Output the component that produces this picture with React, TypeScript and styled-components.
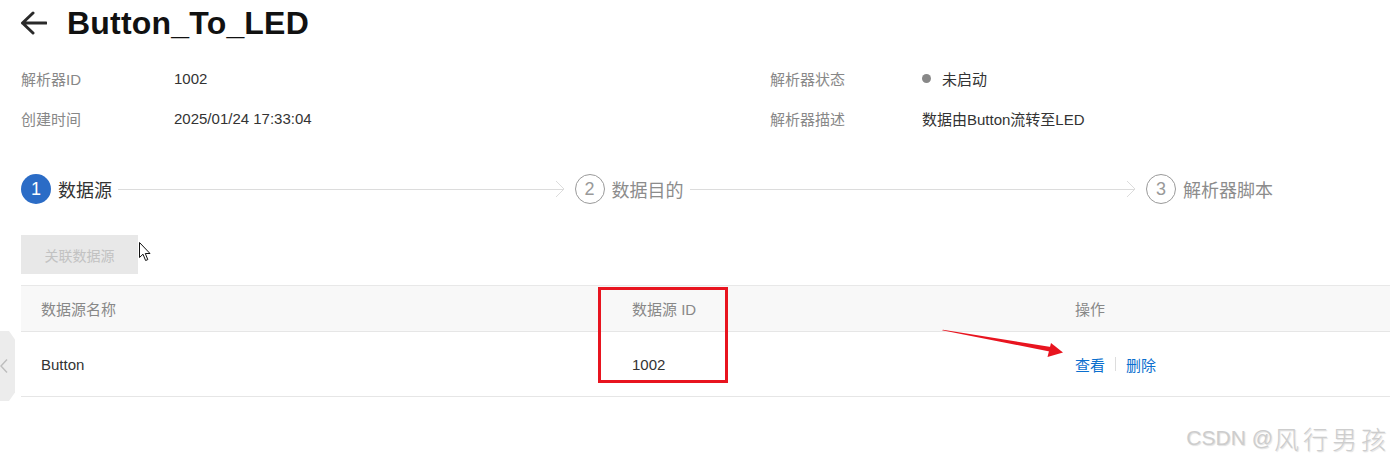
import React from "react";
import styled, { createGlobalStyle } from "styled-components";

const Global = createGlobalStyle`
  html, body { margin: 0; padding: 0; background: #ffffff; }
  body { font-family: "Liberation Sans", "Noto Sans CJK SC", sans-serif; }
  * { box-sizing: border-box; }
`;

const Page = styled.div`
  position: relative;
  width: 1390px;
  height: 469px;
  padding-left: 21px;
  overflow: hidden;
  background: #ffffff;
`;

const Header = styled.div`
  display: flex;
  align-items: center;
  height: 46px;
  gap: 20px;
`;

const BackIcon = styled.svg`
  width: 27px;
  height: 24px;
  margin-left: -1px;
  flex-shrink: 0;
`;

const Title = styled.h1`
  margin: 0;
  font-size: 32px;
  font-weight: 700;
  color: #111111;
  line-height: 40px;
  letter-spacing: 0.2px;
`;

const InfoGrid = styled.div`
  margin-top: 12px;
  display: grid;
  grid-template-columns: 153px 596px 152px 1fr;
  grid-auto-rows: 40px;
  align-items: center;
  font-size: 15px;
`;

const Label = styled.div`
  color: #888888;
`;

const Value = styled.div`
  color: #333333;
  display: flex;
  align-items: center;
`;

const Dot = styled.span`
  width: 9px;
  height: 9px;
  border-radius: 50%;
  background: #888888;
  margin-left: 0;
  margin-right: 11px;
`;

const Steps = styled.div`
  margin-top: 36px;
  width: 1252px;
  height: 30px;
  display: flex;
  align-items: center;
`;

const Step = styled.div`
  display: flex;
  align-items: center;
  gap: 7px;
  flex-shrink: 0;
`;

const StepCircle = styled.div<{ $active?: boolean }>`
  width: 30px;
  height: 30px;
  border-radius: 50%;
  display: flex;
  align-items: center;
  justify-content: center;
  font-size: 18px;
  font-family: "Liberation Sans", sans-serif;
  background: ${(p) => (p.$active ? "#2b6cc6" : "#ffffff")};
  color: ${(p) => (p.$active ? "#ffffff" : "#999999")};
  border: ${(p) => (p.$active ? "none" : "1px solid #9a9a9a")};
`;

const StepText = styled.span<{ $active?: boolean }>`
  font-size: 18px;
  font-family: "Noto Sans CJK SC", sans-serif;
  color: ${(p) => (p.$active ? "#333333" : "#8c8c8c")};
  line-height: 30px;
`;

const Connector = styled.div`
  flex: 1;
  display: flex;
  align-items: center;
  margin: 0 10px 0 6px;
  height: 30px;
`;

const ConnectorLine = styled.div`
  flex: 1;
  height: 1px;
  background: #dcdcdc;
`;

const Chevron = styled.svg`
  width: 10px;
  height: 20px;
  margin-left: -9px;
  flex-shrink: 0;
`;

const LinkButton = styled.button`
  margin-top: 31px;
  width: 117px;
  height: 39px;
  border: none;
  background: #e8e8e8;
  color: #c2c2c2;
  font-size: 14px;
  font-family: "Noto Sans CJK SC", sans-serif;
  display: block;
  padding: 0;
  cursor: not-allowed;
`;

const Table = styled.div`
  margin-top: 11px;
  border-top: 1px solid #e8e8e8;
  display: grid;
  grid-template-columns: 591px 443px 1fr;
  font-size: 15px;
`;

const HeadCell = styled.div`
  height: 46px;
  background: #f8f8f8;
  border-bottom: 1px solid #e6e6e6;
  padding-left: 20px;
  display: flex;
  align-items: center;
  color: #888888;
`;

const BodyCell = styled.div`
  height: 65px;
  border-bottom: 1px solid #e6e6e6;
  padding-left: 20px;
  display: flex;
  align-items: center;
  color: #333333;
`;

const Action = styled.a`
  color: #0b6fce;
  text-decoration: none;
  cursor: pointer;
`;

const Sep = styled.span`
  width: 1px;
  height: 14px;
  background: #dddddd;
  margin: 0 10px;
`;

const RedBox = styled.div`
  position: absolute;
  left: 598px;
  top: 287px;
  width: 130px;
  height: 96px;
  border: 3px solid #e8141f;
  pointer-events: none;
`;

const Overlay = styled.svg`
  position: absolute;
  pointer-events: none;
`;

const SideTab = styled.div`
  position: absolute;
  left: 0;
  top: 331px;
  width: 15px;
  height: 70px;
  background: #ececec;
  clip-path: polygon(0 0, 60% 0, 100% 12%, 100% 88%, 60% 100%, 0 100%);
  display: flex;
  align-items: center;
`;

const Watermark = styled.div`
  position: absolute;
  right: 4px;
  bottom: 13px;
  font-size: 21px;
  color: #cdcdcd;
  text-shadow: 1px 1px 1px rgba(0, 0, 0, 0.12);
  font-family: "Liberation Sans", "Noto Sans CJK SC", sans-serif;
  display: flex;
  align-items: center;
  white-space: nowrap;
`;

const WatermarkCJK = styled.span`
  font-size: 25px;
  font-weight: 300;
  letter-spacing: 4px;
  margin-right: -4px;
  font-family: "Noto Sans CJK SC", sans-serif;
  margin-left: 1px;
`;

export default function App() {
  return (
    <>
      <Global />
      <Page>
        <Header>
          <BackIcon viewBox="0 0 27 24" fill="none">
            <path
              d="M2.5 12 H26 M13 2 L2.5 12 L13 22"
              stroke="#2a2a2a"
              strokeWidth="3"
              strokeLinecap="round"
              strokeLinejoin="round"
            />
          </BackIcon>
          <Title>Button_To_LED</Title>
        </Header>

        <InfoGrid>
          <Label>解析器ID</Label>
          <Value>1002</Value>
          <Label>解析器状态</Label>
          <Value>
            <Dot />
            未启动
          </Value>
          <Label>创建时间</Label>
          <Value>2025/01/24 17:33:04</Value>
          <Label>解析器描述</Label>
          <Value>数据由Button流转至LED</Value>
        </InfoGrid>

        <Steps>
          <Step>
            <StepCircle $active>1</StepCircle>
            <StepText $active>数据源</StepText>
          </Step>
          <Connector>
            <ConnectorLine />
            <Chevron viewBox="0 0 10 20" fill="none">
              <path d="M1 2 L9 10 L1 18" stroke="#dcdcdc" strokeWidth="1" />
            </Chevron>
          </Connector>
          <Step>
            <StepCircle>2</StepCircle>
            <StepText>数据目的</StepText>
          </Step>
          <Connector>
            <ConnectorLine />
            <Chevron viewBox="0 0 10 20" fill="none">
              <path d="M1 2 L9 10 L1 18" stroke="#dcdcdc" strokeWidth="1" />
            </Chevron>
          </Connector>
          <Step>
            <StepCircle>3</StepCircle>
            <StepText>解析器脚本</StepText>
          </Step>
        </Steps>

        <LinkButton disabled>关联数据源</LinkButton>

        <Table>
          <HeadCell>数据源名称</HeadCell>
          <HeadCell>数据源 ID</HeadCell>
          <HeadCell>操作</HeadCell>
          <BodyCell>Button</BodyCell>
          <BodyCell>1002</BodyCell>
          <BodyCell>
            <Action>查看</Action>
            <Sep />
            <Action>删除</Action>
          </BodyCell>
        </Table>

        <RedBox />

        <Overlay
          style={{ left: 935, top: 325 }}
          width="135"
          height="40"
          viewBox="0 0 135 40"
        >
          <polygon points="7,5.2 8,4.8 116,22 114.5,26.5" fill="#e8141f" />
          <polygon points="128,27.5 116,18 112.5,32" fill="#e8141f" />
        </Overlay>

        <Overlay
          style={{ left: 139, top: 242 }}
          width="13"
          height="20"
          viewBox="0 0 13 20"
        >
          <path
            d="M0.5 0.5 L0.5 15.5 L4 12.2 L6.6 18.5 L8.8 17.6 L6.3 11.5 L11 11.5 Z"
            fill="#ffffff"
            stroke="#111111"
            strokeWidth="1"
            strokeLinejoin="round"
          />
        </Overlay>

        <SideTab>
          <svg width="9" height="16" viewBox="0 0 9 16" fill="none">
            <path d="M7 1.5 L1 8 L7 14.5" stroke="#bdbdbd" strokeWidth="1.4" />
          </svg>
        </SideTab>

        <Watermark>
          CSDN @<WatermarkCJK>风行男孩</WatermarkCJK>
        </Watermark>
      </Page>
    </>
  );
}
